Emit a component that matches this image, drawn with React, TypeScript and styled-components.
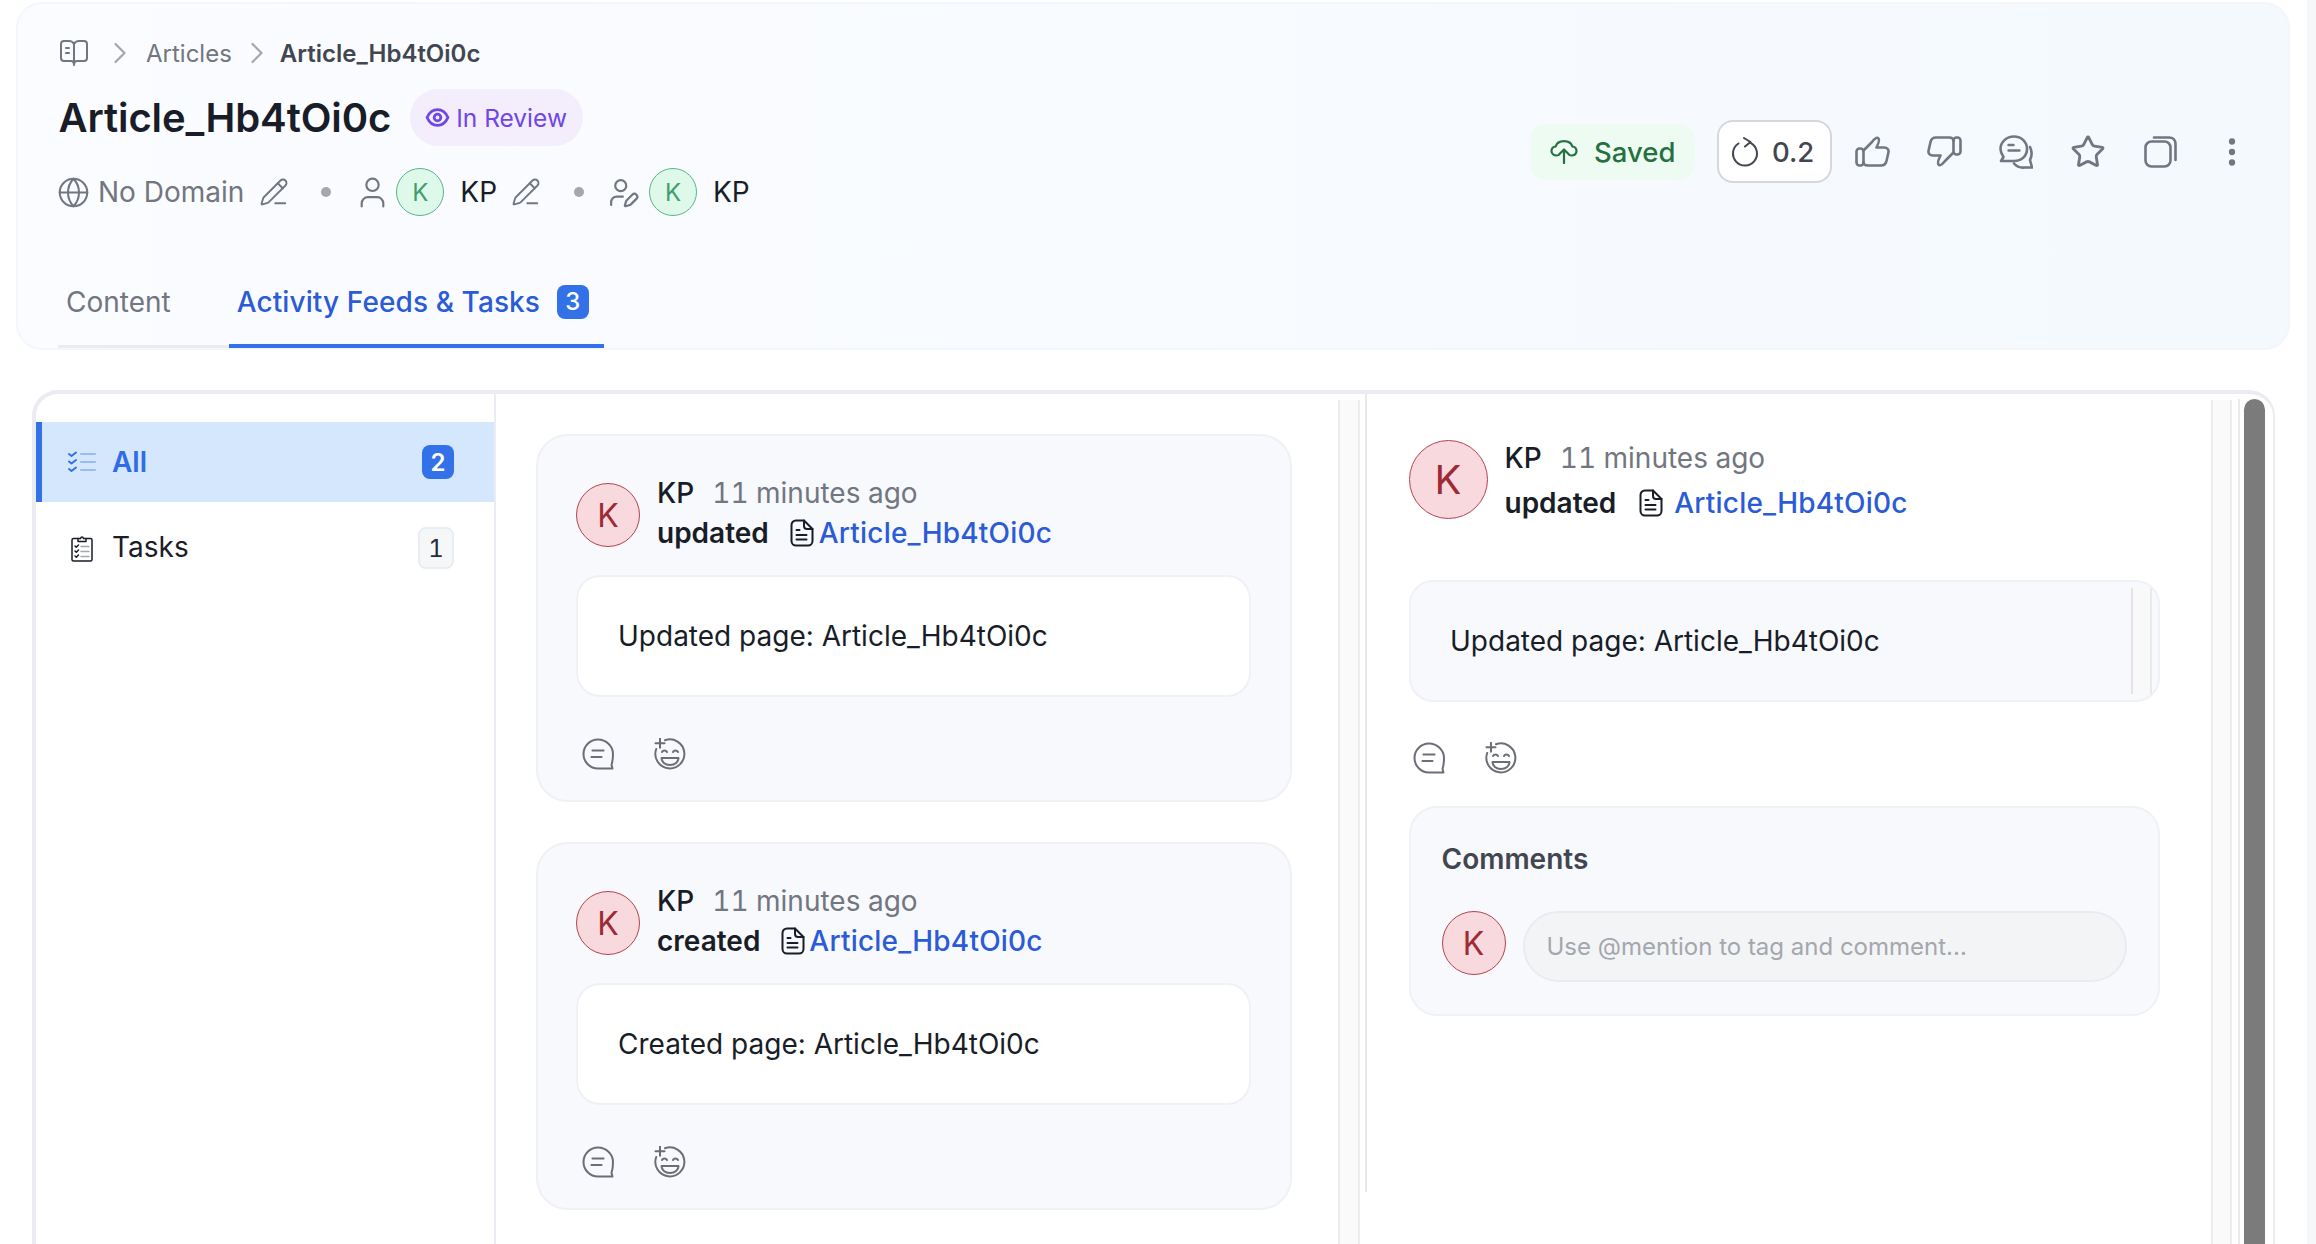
import React from "react";
import styled, { createGlobalStyle } from "styled-components";
import { ChevronRight, EllipsisVertical, Globe, PencilLine, Star, User, UserPen } from "lucide-react";

const GlobalStyle = createGlobalStyle`
  html, body {
    margin: 0;
    height: 100%;
    overflow: hidden;
    background: #fff;
    font-family: Inter, "Liberation Sans", sans-serif;
    color: #181d27;
  }
  * { box-sizing: border-box; }
`;

const Page = styled.div`
  display: flex;
  height: 1244px;
  overflow: hidden;
`;

const Main = styled.main`
  flex: 1;
  min-width: 0;
  padding-top: 2px;
`;

const PageEdge = styled.div`
  width: 9px;
  background: #f6f7f9;
`;

/* header */
const Header = styled.header`
  display: flex;
  flex-direction: column;
  height: 348px;
  margin: 0 17px 0 16px;
  padding: 34px 20px 0 42px;
  border: 2px solid #f3f6fb;
  border-radius: 26px;
  background: linear-gradient(90deg, #fbfcff 0%, #f4f9fe 100%);
`;

const HeaderTop = styled.div`
  display: flex;
  justify-content: space-between;
`;

const Breadcrumb = styled.nav`
  display: flex;
  align-items: center;
  height: 30px;
  font-size: 24px;
  color: #717680;
  svg { flex: none; }
`;

const CrumbChevron = styled(ChevronRight)<{ $left: number; $right: number }>`
  margin: 0 ${(p) => p.$right}px 0 ${(p) => p.$left}px;
  color: #a4a7ae;
`;

const CrumbCurrent = styled.span`
  font-weight: 600;
  color: #414651;
`;

const TitleRow = styled.div`
  display: flex;
  align-items: center;
  gap: 19px;
  height: 57px;
  margin-top: 21px;
`;

const Title = styled.h1`
  margin: 0 0 0 -1.5px;
  font-size: 40px;
  font-weight: 600;
  letter-spacing: -0.1px;
  color: #181d27;
`;

const ReviewBadge = styled.span`
  display: inline-flex;
  align-items: center;
  gap: 6px;
  height: 57px;
  padding: 0 16px 0 15px;
  border-radius: 29px;
  background: #f3edfc;
  font-size: 24.5px;
  color: #6f47e6;
`;

const MetaRow = styled.div`
  display: flex;
  align-items: center;
  height: 48px;
  margin-top: 22px;
  font-size: 28px;
  color: #181d27;
`;

const MetaIcon = styled.span<{ $left?: number; $right?: number }>`
  display: inline-flex;
  flex: none;
  margin: 0 ${(p) => p.$right ?? 0}px 0 ${(p) => p.$left ?? 0}px;
  color: #717680;
`;

const MetaMuted = styled.span`
  color: #717680;
`;

const MetaName = styled.span`
  margin-left: 16px;
`;

const MetaDot = styled.span<{ $left: number }>`
  flex: none;
  width: 10px;
  height: 10px;
  margin-left: ${(p) => p.$left}px;
  border-radius: 50%;
  background: #a4a7ae;
`;

const Avatar = styled.span<{ $size: number; $font: number; $tone: "red" | "green"; $top?: number; $left?: number }>`
  display: inline-flex;
  flex: none;
  align-items: center;
  justify-content: center;
  width: ${(p) => p.$size}px;
  height: ${(p) => p.$size}px;
  margin-top: ${(p) => p.$top ?? 0}px;
  margin-left: ${(p) => p.$left ?? 0}px;
  border-radius: 50%;
  font-size: ${(p) => p.$font}px;
  border: 1.5px solid ${(p) => (p.$tone === "red" ? "#b4434f" : "#5cb58c")};
  background: ${(p) => (p.$tone === "red" ? "#f8d9dd" : "#def9ea")};
  color: ${(p) => (p.$tone === "red" ? "#9e2a35" : "#3f9e70")};
`;

const Actions = styled.div`
  display: flex;
  align-items: center;
  height: 63px;
  margin-top: 82px;
`;

const SavedBadge = styled.span`
  display: inline-flex;
  align-items: center;
  gap: 16px;
  width: 165px;
  height: 56px;
  margin-right: 22px;
  padding-left: 20px;
  border-radius: 16px;
  background: #edfbf3;
  font-size: 27.5px;
  font-weight: 500;
  color: #25703f;
`;

const VersionButton = styled.button`
  display: inline-flex;
  align-items: center;
  gap: 13px;
  width: 115px;
  height: 63px;
  margin-right: 4px;
  padding: 0 0 0 12px;
  border: 2px solid #d5d7da;
  border-radius: 16px;
  background: #fff;
  font: 500 27.5px Inter, sans-serif;
  color: #414651;
`;

const IconButton = styled.span`
  display: inline-flex;
  align-items: center;
  justify-content: center;
  width: 72px;
  height: 63px;
  color: #717680;
`;

const TabList = styled.div`
  display: flex;
  margin: auto 0 0 -2px;
`;

const Tab = styled.div<{ $active?: boolean; $pad: number }>`
  display: flex;
  align-items: flex-start;
  height: 64px;
  padding: 0 ${(p) => p.$pad}px 0 8px;
  border-bottom: ${(p) => (p.$active ? "4px solid #3371e8" : "3px solid #e9ecf1")};
  font-size: 28px;
  line-height: 36px;
  letter-spacing: ${(p) => (p.$active ? "0.1px" : "0")};
  font-weight: ${(p) => (p.$active ? 500 : 400)};
  color: ${(p) => (p.$active ? "#2b5bd7" : "#717680")};
`;

const CountBadge = styled.span<{ $active?: boolean }>`
  display: inline-flex;
  align-items: center;
  justify-content: center;
  border-radius: 8px;
  font-size: 24px;
  font-variant-numeric: tabular-nums;
  ${(p) =>
    p.$active
      ? "width: 32px; height: 34px; background: #3371e8; color: #fff;"
      : "width: 36px; height: 42px; border: 2px solid #e9ecf1; background: #f6f7f9; color: #252b37;"}
`;

const TabBadge = styled(CountBadge)`
  margin: 1px 0 0 17px;
`;

/* panel */
const Panel = styled.section`
  display: flex;
  height: 900px;
  margin: 40px 32px 0 32px;
  border-style: solid;
  border-color: #eaecf2;
  border-width: 4px 2px 0 4px;
  border-radius: 26px 26px 0 0;
  overflow: hidden;
`;

const Sidebar = styled.aside`
  flex: none;
  width: 460px;
  padding-top: 28px;
  border-right: 2px solid #e9edf3;
`;

const SideRow = styled.div<{ $active?: boolean }>`
  display: flex;
  align-items: center;
  height: 80px;
  padding: 0 40px 0 ${(p) => (p.$active ? 24 : 30)}px;
  margin-top: ${(p) => (p.$active ? 0 : 6)}px;
  border-left: ${(p) => (p.$active ? "6px solid #3371e8" : "none")};
  background: ${(p) => (p.$active ? "#d5e7fd" : "transparent")};
  font-size: 28px;
  font-weight: ${(p) => (p.$active ? 600 : 400)};
  color: ${(p) => (p.$active ? "#2f6ce5" : "#181d27")};
`;

const SideIcon = styled.span`
  display: flex;
  justify-content: center;
  width: 32px;
  margin-right: 14px;
`;

const SideLabel = styled.span<{ $lift?: number }>`
  flex: 1;
  padding-bottom: ${(p) => p.$lift ?? 0}px;
`;

const Feed = styled.div`
  flex: none;
  display: flex;
  flex-direction: column;
  gap: 40px;
  width: 842px;
  padding: 40px 46px 0 40px;
`;

const Card = styled.article`
  flex: none;
  height: 368px;
  padding: 38px 39px 0 38px;
  border: 2px solid #eff1f5;
  border-radius: 32px;
  background: #f8f9fd;
`;

const EntryHead = styled.div`
  display: flex;
  gap: 17px;
`;

const EntryLines = styled.div<{ $gap: number }>`
  display: flex;
  flex-direction: column;
  gap: ${(p) => p.$gap}px;
  font-size: 28px;
  line-height: 38px;
`;

const Line = styled.div`
  display: flex;
  align-items: center;
`;

const Author = styled.span`
  font-weight: 500;
  color: #181d27;
`;

const When = styled.span`
  margin-left: 18px;
  font-variant-numeric: tabular-nums;
  color: #717680;
`;

const Verb = styled.span`
  font-weight: 600;
  color: #181d27;
`;

const ArticleLink = styled.a`
  font-weight: 500;
  letter-spacing: 0.2px;
  color: #2b5bd7;
`;

const DocWrap = styled.span<{ $left: number; $right: number }>`
  display: inline-flex;
  margin: 0 ${(p) => p.$right}px 0 ${(p) => p.$left}px;
`;

const MessageBox = styled.div`
  display: flex;
  align-items: center;
  height: 122px;
  margin-top: 23px;
  padding-left: 40px;
  border: 2px solid #eff1f5;
  border-radius: 24px;
  background: #fff;
  font-size: 28px;
  color: #181d27;
`;

const EntryActions = styled.div<{ $top: number; $left: number }>`
  display: flex;
  gap: 40px;
  margin: ${(p) => p.$top}px 0 0 ${(p) => p.$left}px;
  color: #6b6e76;
`;

const Gutter = styled.div<{ $width: number }>`
  flex: none;
  width: ${(p) => p.$width}px;
  margin-top: 6px;
  border-left: 2px solid #ececee;
  border-right: 2px solid #ececee;
  background: #fafafa;
`;

const Detail = styled.div`
  position: relative;
  flex: none;
  width: 846px;
  height: 798px;
  margin-left: 5px;
  padding: 45px 51px 0 41.5px;
  border-left: 2px solid #e8e8ea;
`;

const DetailBox = styled(MessageBox)`
  position: relative;
  margin-top: 58px;
  padding-left: 39.5px;
  background: #f8f9fd;
`;

const BoxGutter = styled.span`
  position: absolute;
  top: 6px;
  bottom: 6px;
  right: 6px;
  width: 21px;
  border-left: 2px solid #e4e4e6;
  border-right: 2px solid #e9e9ec;
  background: #f9f9fa;
`;

const CommentsBox = styled.div`
  height: 210px;
  margin-top: 32px;
  padding: 34px 31px 0;
  border: 2px solid #eff1f5;
  border-radius: 28px;
  background: #f8f9fd;
`;

const CommentsTitle = styled.div`
  font-size: 28px;
  line-height: 34px;
  font-weight: 600;
  color: #414651;
`;

const CommentRow = styled.div`
  display: flex;
  gap: 17px;
  margin-top: 35px;
`;

const CommentInput = styled.input`
  flex: 1;
  min-width: 0;
  height: 71px;
  padding: 0 22px;
  border: 2px solid #e9ebf2;
  border-radius: 36px;
  background: #f3f4f6;
  font: 400 24px Inter, sans-serif;
  &::placeholder { color: #a4a7ae; opacity: 1; }
`;

const ScrollTrack = styled.div`
  flex: none;
  width: 35px;
  margin: 5px 0 0 6px;
  padding-left: 4px;
  border-left: 2px solid #e9e9ee;
`;

const ScrollThumb = styled.div`
  width: 21px;
  height: 100%;
  border-radius: 11px 11px 0 0;
  background: #7b7b7b;
`;

/* drawings */
const BookIcon = () => (
  <svg width="28" height="26" viewBox="0 0 28 26" fill="none" stroke="#717680" strokeWidth="2" strokeLinecap="round" strokeLinejoin="round">
    <path d="M14 4v20M14 4c-1-2-2.500-3-5-3H4a3 3 0 0 0-3 3v14a3 3 0 0 0 3 3h7c1.800 0 3 1 3 4 0-3 1.200-4 3-4h7a3 3 0 0 0 3-3V4a3 3 0 0 0-3-3h-5c-2.500 0-4 1-5 3Z" />
    <path d="M6 8h3M6 13h3" />
  </svg>
);

const EyeIcon = () => (
  <svg width="25" height="25" viewBox="0 0 24 24" fill="none" stroke="#6f47e6" strokeWidth="2.700">
    <path d="M12 4.500c5 0 8.500 4 10 7.500-1.500 3.500-5 7.500-10 7.500S3.500 15.500 2 12c1.500-3.500 5-7.500 10-7.500Z" />
    <circle cx="12" cy="12" r="3.200" />
  </svg>
);

const CloudIcon = () => (
  <svg width="28" height="24" viewBox="0 0 28 24" fill="none" stroke="#25703f" strokeWidth="2.200" strokeLinecap="round" strokeLinejoin="round">
    <path d="M7 15.500C3.500 15.500 1.500 13.500 1.500 11c0-2.500 1.800-4.200 4.200-4.500C6.600 3.300 9.800 1.200 14 1.200s7.400 2.100 8.300 5.300c2.400.3 4.200 2 4.200 4.500 0 2.500-2 4.500-5.500 4.500" />
    <path d="M14 23V10M8.500 15 14 9.500l5.500 5.500" />
  </svg>
);

const VersionIcon = () => (
  <svg width="28" height="30" viewBox="0 0 28 30" fill="none" stroke="#414651" strokeWidth="2" strokeLinecap="round" strokeLinejoin="round">
    <path d="M7.500 6.500A12 12 0 1 0 20 6.200" />
    <path d="M13 1l6.500 4L14 9.500" />
  </svg>
);

const ThumbUp = ({ flip }: { flip?: boolean }) => (
  <svg width="35" height="31" viewBox="0 0 35 31" fill="none" stroke="currentColor" strokeWidth="2.600" strokeLinecap="round" strokeLinejoin="round" transform={flip ? "rotate(180)" : undefined}>
    <rect x="1.500" y="12.500" width="7" height="17" rx="3" />
    <path d="M8.500 14.500 17 6c2-2.500 4-5 6-4 2.500 1.500 0 6.500-1.500 9.500H29c3.500 0 5 2.300 4.400 5L31.500 25c-.7 3-2.700 4.500-5.500 4.500H13c-2.500 0-4.500-1-4.500-3.500" />
  </svg>
);

const ChatIcon = () => (
  <svg width="34" height="34" viewBox="0 0 34 34" fill="none" stroke="currentColor" strokeWidth="2.600" strokeLinecap="round" strokeLinejoin="round">
    <path d="M15 1.500c7.500 0 13 5.500 13 12.500s-5.500 12-13 12H2l2.500-4C2.800 19.500 1.500 17 1.500 14 1.500 7 7.500 1.500 15 1.500Z" />
    <path d="M9.500 10h5M9.500 15.500h11" strokeWidth="2.400" />
    <path d="M31 12c2 4 2 9 0 13l2 7.500h-7c-4.500.5-8-.5-11-4" />
  </svg>
);

const CopyIcon = () => (
  <svg width="33" height="32" viewBox="0 0 33 32" fill="none" stroke="currentColor" strokeWidth="2.600" strokeLinecap="round" strokeLinejoin="round">
    <rect x="1.500" y="5.500" width="25" height="25" rx="6" />
    <path d="M10 1.500h15c4 0 6.500 2.500 6.500 6.500v16" />
  </svg>
);

const CheckListIcon = () => (
  <svg width="28" height="22" viewBox="0 0 28 22" fill="none" strokeLinecap="round" strokeLinejoin="round">
    <path d="M1 3l2.500 2L8 1.500M1 10.500l2.500 2L8 9M1 18l2.500 2L8 16.500" stroke="#3371e8" strokeWidth="2" />
    <path d="M13 3h14M13 11h14M13 19h14" stroke="#98bdf5" strokeWidth="2" />
  </svg>
);

const ClipboardIcon = () => (
  <svg width="22" height="27" viewBox="0 0 22 27" fill="none" stroke="#181d27" strokeWidth="1.500" strokeLinecap="round" strokeLinejoin="round">
    <path d="M7 3.500H2.500a1.500 1.500 0 0 0-1.500 1.500v19.500A1.500 1.500 0 0 0 2.500 26h17a1.500 1.500 0 0 0 1.500-1.500V5a1.500 1.500 0 0 0-1.500-1.500H15" />
    <path d="M7 6.500V3.500h2.500C10 1.500 12 1.500 12.500 3.500H15v3Z" />
    <path d="M4 11l1.300 1.200L7.500 10M4 16l1.300 1.200L7.500 15M4 21l1.300 1.200L7.500 20" />
    <path d="M10 11.500h8M10 16.500h8M10 21.500h8" stroke="#a4a7ae" />
  </svg>
);

const DocIcon = () => (
  <svg width="24" height="28" viewBox="0 0 24 28" fill="none" stroke="#181d27" strokeWidth="2" strokeLinecap="round" strokeLinejoin="round">
    <path d="M14 1.500H6A4.500 4.500 0 0 0 1.500 6v16A4.500 4.500 0 0 0 6 26.500h12a4.500 4.500 0 0 0 4.500-4.500V10L14 1.500Z" />
    <path d="M14 1.500V7a3 3 0 0 0 3 3h5.500" />
    <path d="M6.500 11h3M6.500 16h10M6.500 20.500h10" />
  </svg>
);

const ReplyIcon = () => (
  <svg width="32" height="32" viewBox="0 0 32 32" fill="none" stroke="currentColor" strokeWidth="2" strokeLinecap="round" strokeLinejoin="round">
    <path d="M16 1.500C8 1.500 1.500 8 1.500 16S8 30.500 16 30.500h14.500l-1-3.500c1-3 1.500-8 1.500-11C31 8 24 1.500 16 1.500Z" />
    <path d="M10.500 12.500h11M9.500 19h10" strokeWidth="2.200" />
  </svg>
);

const ReactIcon = () => (
  <svg width="32" height="32" viewBox="0 0 32 32" fill="none" stroke="currentColor" strokeWidth="2" strokeLinecap="round" strokeLinejoin="round">
    <path d="M11 2.200A14.500 14.500 0 1 1 2.200 11" />
    <path d="M6 .8v9M1.500 5.300h9" />
    <path d="M8 14c1-2 4-2 5 0M19 14c1-2 4-2 5 0" />
    <path d="M7.500 20h17c0 4-3.500 7-8.500 7s-8.500-3-8.500-7Z" />
  </svg>
);

type EntryProps = {
  verb: string;
  docLeft: number;
  docRight: number;
  gap: number;
  size: number;
  font: number;
  top: number;
};

const EntryHeader = ({ verb, docLeft, docRight, gap, size, font, top }: EntryProps) => (
  <EntryHead>
    <Avatar $size={size} $font={font} $tone="red" $top={top}>K</Avatar>
    <EntryLines $gap={gap}>
      <Line>
        <Author>KP</Author>
        <When>11 minutes ago</When>
      </Line>
      <Line>
        <Verb>{verb}</Verb>
        <DocWrap $left={docLeft} $right={docRight}>
          <DocIcon />
        </DocWrap>
        <ArticleLink>Article_Hb4tOi0c</ArticleLink>
      </Line>
    </EntryLines>
  </EntryHead>
);

const ReplyActions = ({ top, left }: { top: number; left: number }) => (
  <EntryActions $top={top} $left={left}>
    <ReplyIcon />
    <ReactIcon />
  </EntryActions>
);

export default function App() {
  return (
    <>
      <GlobalStyle />
      <Page>
        <Main>
          <Header>
            <HeaderTop>
              <div>
                <Breadcrumb>
                  <BookIcon />
                  <CrumbChevron size={36} strokeWidth={1.5} $left={14} $right={8} />
                  Articles
                  <CrumbChevron size={36} strokeWidth={1.5} $left={7} $right={5} />
                  <CrumbCurrent>Article_Hb4tOi0c</CrumbCurrent>
                </Breadcrumb>
                <TitleRow>
                  <Title>Article_Hb4tOi0c</Title>
                  <ReviewBadge>
                    <EyeIcon />
                    In Review
                  </ReviewBadge>
                </TitleRow>
                <MetaRow>
                  <MetaIcon $left={-3} $right={8}><Globe size={33} strokeWidth={1.5} /></MetaIcon>
                  <MetaMuted>No Domain</MetaMuted>
                  <MetaIcon $left={15}><PencilLine size={30} strokeWidth={1.5} /></MetaIcon>
                  <MetaDot $left={32} />
                  <MetaIcon $left={23}><User size={37} strokeWidth={1.4} /></MetaIcon>
                  <Avatar $size={48} $font={24} $tone="green" $left={5}>K</Avatar>
                  <MetaName>KP</MetaName>
                  <MetaIcon $left={14}><PencilLine size={30} strokeWidth={1.5} /></MetaIcon>
                  <MetaDot $left={33} />
                  <MetaIcon $left={23}><UserPen size={33} strokeWidth={1.6} /></MetaIcon>
                  <Avatar $size={48} $font={24} $tone="green" $left={9}>K</Avatar>
                  <MetaName>KP</MetaName>
                </MetaRow>
              </div>
              <Actions>
                <SavedBadge>
                  <CloudIcon />
                  Saved
                </SavedBadge>
                <VersionButton>
                  <VersionIcon />
                  0.2
                </VersionButton>
                <IconButton><ThumbUp /></IconButton>
                <IconButton><ThumbUp flip /></IconButton>
                <IconButton><ChatIcon /></IconButton>
                <IconButton><Star size={36} strokeWidth={1.9} /></IconButton>
                <IconButton><CopyIcon /></IconButton>
                <IconButton><EllipsisVertical size={36} strokeWidth={2.2} /></IconButton>
              </Actions>
            </HeaderTop>
            <TabList>
              <Tab $pad={58}>Content</Tab>
              <Tab $active $pad={15}>
                Activity Feeds &amp; Tasks
                <TabBadge $active>3</TabBadge>
              </Tab>
            </TabList>
          </Header>

          <Panel>
            <Sidebar>
              <SideRow $active>
                <SideIcon><CheckListIcon /></SideIcon>
                <SideLabel>All</SideLabel>
                <CountBadge $active>2</CountBadge>
              </SideRow>
              <SideRow>
                <SideIcon><ClipboardIcon /></SideIcon>
                <SideLabel $lift={3}>Tasks</SideLabel>
                <CountBadge>1</CountBadge>
              </SideRow>
            </Sidebar>

            <Feed>
              <Card>
                <EntryHeader verb="updated" docLeft={21} docRight={5} gap={2} size={64} font={32} top={9} />
                <MessageBox>Updated page: Article_Hb4tOi0c</MessageBox>
                <ReplyActions top={41} left={6} />
              </Card>
              <Card>
                <EntryHeader verb="created" docLeft={21} docRight={4} gap={2} size={64} font={32} top={9} />
                <MessageBox>Created page: Article_Hb4tOi0c</MessageBox>
                <ReplyActions top={41} left={6} />
              </Card>
            </Feed>

            <Gutter $width={22} />

            <Detail>
              <EntryHeader verb="updated" docLeft={23} docRight={11} gap={7} size={79} font={40} top={1} />
              <DetailBox>
                Updated page: Article_Hb4tOi0c
                <BoxGutter />
              </DetailBox>
              <ReplyActions top={40} left={4} />
              <CommentsBox>
                <CommentsTitle>Comments</CommentsTitle>
                <CommentRow>
                  <Avatar $size={64} $font={32} $tone="red">K</Avatar>
                  <CommentInput placeholder="Use @mention to tag and comment..." />
                </CommentRow>
              </CommentsBox>
            </Detail>

            <Gutter $width={21} />

            <ScrollTrack>
              <ScrollThumb />
            </ScrollTrack>
          </Panel>
        </Main>
        <PageEdge />
      </Page>
    </>
  );
}
